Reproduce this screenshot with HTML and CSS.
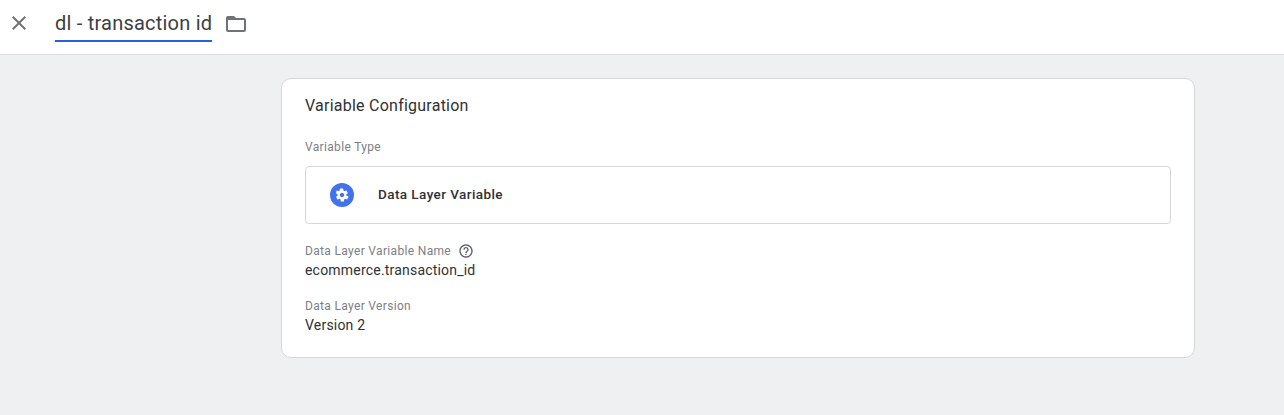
FILE: index.html
```html
<!DOCTYPE html>
<html lang="en">
<head>
<meta charset="utf-8">
<title>dl - transaction id</title>
<link rel="stylesheet" href="styles.css">
</head>
<body>
<header class="topbar">
  <button class="close" aria-label="Close">
    <svg width="24" height="24" viewBox="0 0 24 24"><path fill="#6f7377" d="M19 6.41 17.59 5 12 10.59 6.41 5 5 6.41 10.59 12 5 17.59 6.41 19 12 13.41 17.59 19 19 17.59 13.41 12z"/></svg>
  </button>
  <div class="name">dl - transaction id</div>
  <svg class="folder" width="24" height="24" viewBox="0 0 24 24"><path fill="#6f7377" d="M20 6h-8l-2-2H4c-1.1 0-1.99.9-1.99 2L2 18c0 1.1.9 2 2 2h16c1.1 0 2-.9 2-2V8c0-1.1-.9-2-2-2zm0 12H4V8h16v10z"/></svg>
</header>
<main class="content">
  <section class="card">
    <h2 class="card-title">Variable Configuration</h2>
    <div class="label type-label">Variable Type</div>
    <div class="type-box">
      <svg class="gear" width="24" height="24" viewBox="0 0 24 24">
        <circle cx="12" cy="12" r="12" fill="#4272ec"/>
        <path fill="#fff" d="M17.4 12.8c0-.3.1-.5.1-.8s0-.5-.1-.8l1.7-1.3c.2-.1.2-.3.1-.5l-1.6-2.8c-.1-.2-.3-.2-.5-.2l-2 .8c-.4-.3-.9-.6-1.4-.8l-.3-2.1c0-.2-.2-.3-.4-.3h-3.2c-.2 0-.4.1-.4.3l-.3 2.1c-.5.2-.9.5-1.4.8l-2-.8c-.2-.1-.4 0-.5.2L4.6 9.4c-.1.2-.1.4.1.5l1.7 1.3c0 .3-.1.5-.1.8s0 .5.1.8l-1.7 1.3c-.2.1-.2.3-.1.5l1.6 2.8c.1.2.3.2.5.2l2-.8c.4.3.9.6 1.4.8l.3 2.1c0 .2.2.3.4.3h3.2c.2 0 .4-.1.4-.3l.3-2.1c.5-.2.9-.5 1.4-.8l2 .8c.2.1.4 0 .5-.2l1.6-2.8c.1-.2.1-.4-.1-.5l-1.7-1.3zM12 14.8c-1.5 0-2.8-1.3-2.8-2.8s1.3-2.8 2.8-2.8 2.8 1.3 2.8 2.8-1.3 2.8-2.8 2.8z" transform="translate(2.4 2.4) scale(.8)"/>
      </svg>
      <span class="type-name">Data Layer Variable</span>
    </div>
    <div class="label name-label">Data Layer Variable Name
      <svg class="help" width="16" height="16" viewBox="0 0 24 24"><path fill="#5f6368" d="M11 18h2v-2h-2v2zm1-16C6.48 2 2 6.48 2 12s4.48 10 10 10 10-4.48 10-10S17.52 2 12 2zm0 18c-4.41 0-8-3.59-8-8s3.59-8 8-8 8 3.59 8 8-3.59 8-8 8zm0-14c-2.21 0-4 1.79-4 4h2c0-1.1.9-2 2-2s2 .9 2 2c0 2-3 1.75-3 5h2c0-2.25 3-2.5 3-5 0-2.21-1.79-4-4-4z"/></svg>
    </div>
    <div class="value name-value">ecommerce.transaction_id</div>
    <div class="label version-label">Data Layer Version</div>
    <div class="value">Version 2</div>
  </section>
</main>
</body>
</html>
```
FILE: styles.css
```css
* { box-sizing: border-box; }
html, body { margin: 0; height: 100%; }
body {
  background: #eff0f2;
  font-family: Roboto, "Liberation Sans", sans-serif;
  color: #202124;
  overflow: hidden;
}
.topbar {
  height: 55px;
  background: #fff;
  border-bottom: 1px solid #dadce0;
  display: flex;
  align-items: center;
  padding-left: 7px;
}
.close {
  width: 24px;
  height: 24px;
  padding: 0;
  border: 0;
  background: none;
  display: block;
  margin-bottom: 9px;
}
.name {
  margin-left: 24px;
  width: 157px;
  height: 42px;
  padding-top: 11px;
  font-size: 20px;
  line-height: 24px;
  letter-spacing: .22px;
  white-space: nowrap;
  border-bottom: 2px solid #2a5fd9;
  color: #3c4043;
  align-self: flex-start;
}
.folder { margin-left: 12px; margin-bottom: 7px; }
.content { display: flex; padding: 23px 89px 0 281px; }
.card {
  width: 914px;
  height: 280px;
  background: #fff;
  border: 1px solid #d5d7dc;
  border-radius: 10px;
  padding: 0 23px;
}
.card-title {
  margin: 16px 0 0;
  font-size: 16px;
  font-weight: 400;
  line-height: 22px;
  letter-spacing: .24px;
  color: #303134;
}
.label {
  font-size: 12px;
  line-height: 16px;
  letter-spacing: .33px;
  color: #7c8085;
}
.type-label { margin-top: 22px; }
.type-box {
  margin-top: 11px;
  height: 58px;
  border: 1px solid #d5d7dc;
  border-radius: 4px;
  display: flex;
  align-items: center;
  padding: 0 0 1px 24px;
}
.gear { flex: none; }
.type-name {
  margin-left: 24px;
  font-size: 13.5px;
  font-weight: 500;
  letter-spacing: .42px;
  color: #303134;
  padding-bottom: 1px;
}
.name-label { margin-top: 19px; display: flex; align-items: center; gap: 7px; }
.value {
  font-size: 14px;
  line-height: 20px;
  letter-spacing: .2px;
  color: #303134;
}
.name-value { margin-top: 1px; }
.version-label { margin-top: 18px; }
.version-label + .value { margin-top: 1px; }
```
